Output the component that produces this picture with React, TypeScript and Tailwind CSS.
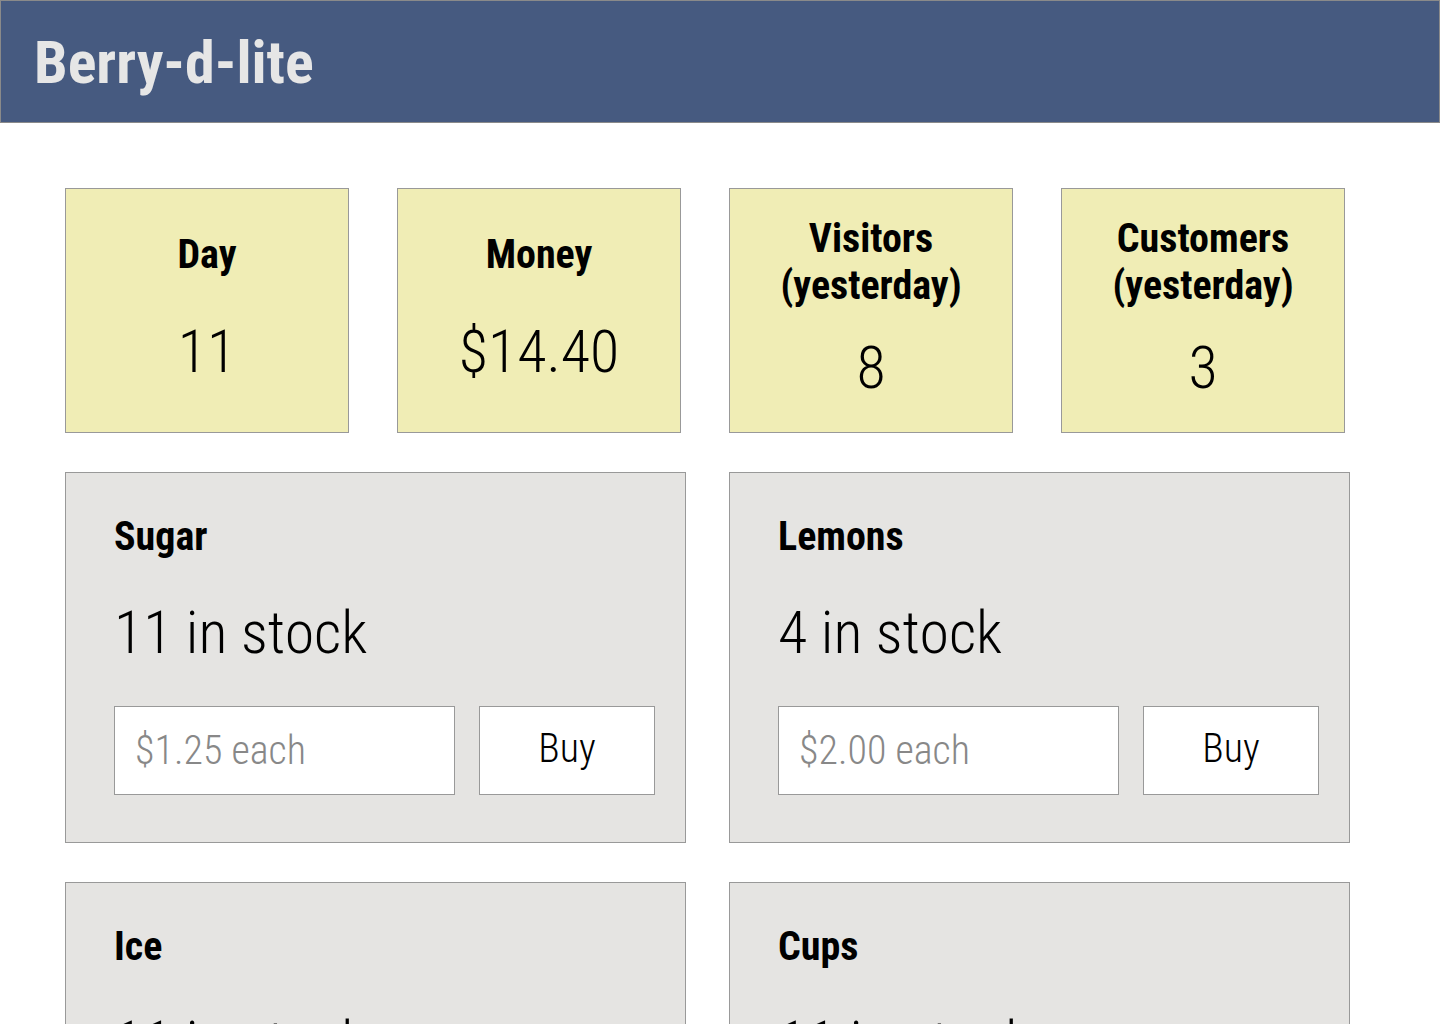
import React from 'react';

const font = '[font-family:"Roboto_Condensed",Roboto,sans-serif] [font-stretch:75%]';

const stats = [
  { label: 'Day', value: '11' },
  { label: 'Money', value: '$14.40' },
  { label: 'Visitors (yesterday)', value: '8' },
  { label: 'Customers (yesterday)', value: '3' },
];

const supplies = [
  { name: 'Sugar', stock: 11, price: '$1.25' },
  { name: 'Lemons', stock: 4, price: '$2.00' },
  { name: 'Ice', stock: 11, price: '$0.50' },
  { name: 'Cups', stock: 11, price: '$0.25' },
];

function StatCard({ label, value }: { label: string; value: string }) {
  return (
    <div className="flex h-[245px] flex-col items-center justify-evenly border border-[#999999] bg-[#f0edb5] px-6 pb-[5px] text-center text-black">
      <div className="text-[40px] font-bold leading-[47px]">{label}</div>
      <div className="text-[60px] font-light leading-[66px]">{value}</div>
    </div>
  );
}

function SupplyCard({ name, stock, price }: { name: string; stock: number; price: string }) {
  return (
    <div className="flex h-[371px] flex-col border border-[#999999] bg-[#e5e4e2] pb-[47px] pl-[48px] pr-[30px] pt-[44px] text-black">
      <div className="text-[40px] font-bold leading-none">{name}</div>
      <div className="mt-[46px] text-[60px] font-light leading-none">{stock} in stock</div>
      <div className="mt-[43px] flex gap-[24px]">
        <input
          type="text"
          placeholder={`${price} each`}
          className={`h-[89px] w-[341px] border border-[#999999] bg-white px-[20px] text-[40px] font-light text-black outline-none placeholder:text-[#888888] ${font}`}
        />
        <button
          type="button"
          className={`h-[89px] flex-1 border border-[#999999] bg-white pb-1 text-[40px] font-light text-black ${font}`}
        >
          Buy
        </button>
      </div>
    </div>
  );
}

export default function App() {
  return (
    <div className={`min-h-screen bg-white ${font}`}>
      <header className="flex h-[123px] items-center border border-[#8a8a8a] bg-[#465a80] pl-[33px] pt-[2px]">
        <h1 className="text-[60px] font-bold leading-none text-[#e6e6e6]">Berry-d-lite</h1>
      </header>

      <main className="flex flex-col gap-[39px] pl-[65px] pt-[65px]">
        <div className="grid w-[1280px] grid-cols-4 gap-x-[48px]">
          {stats.map((s) => (
            <StatCard key={s.label} label={s.label} value={s.value} />
          ))}
        </div>

        <div className="grid w-[1285px] grid-cols-2 gap-x-[43px] gap-y-[39px]">
          {supplies.map((s) => (
            <SupplyCard key={s.name} name={s.name} stock={s.stock} price={s.price} />
          ))}
        </div>
      </main>
    </div>
  );
}
